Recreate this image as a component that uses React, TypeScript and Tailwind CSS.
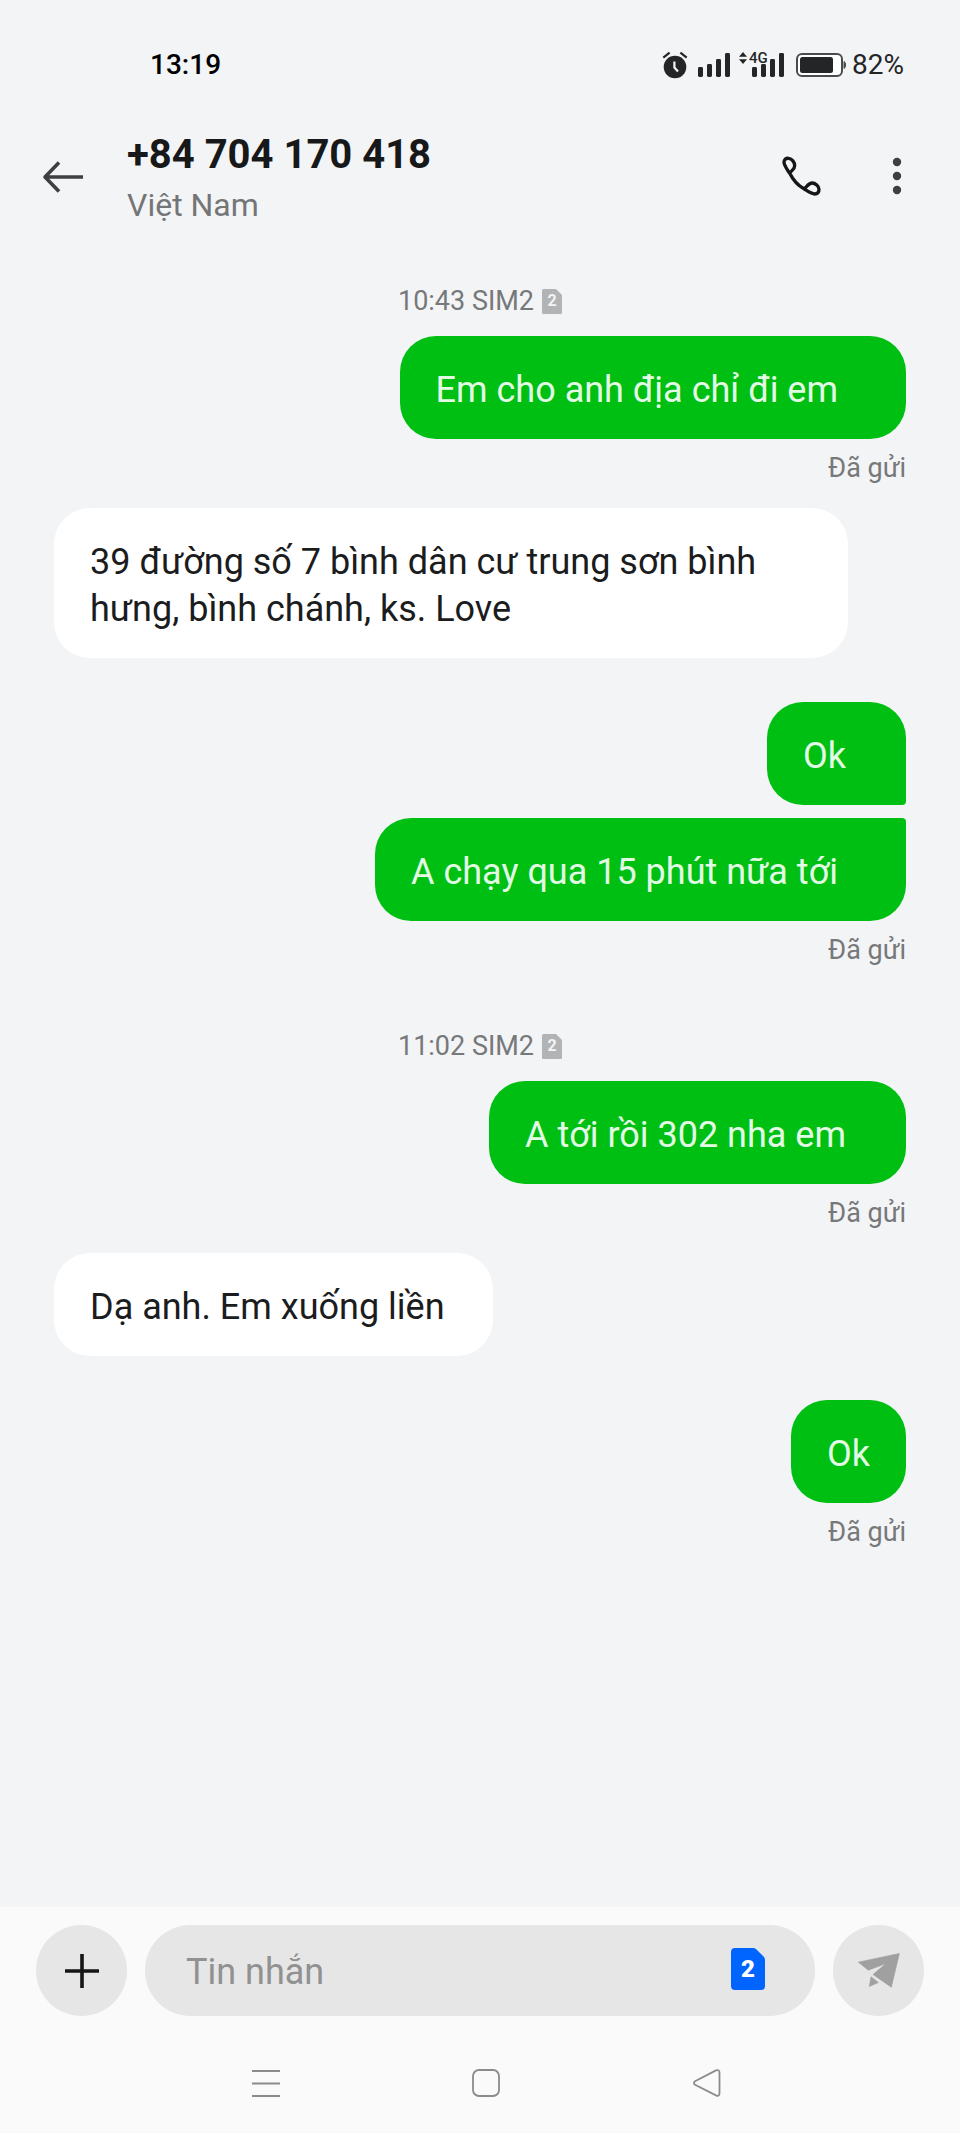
import { Fragment } from "react";

type Message = {
  text: string;
  outgoing: boolean;
  shape: string;
  status?: string;
  space: string;
};

type Group = { time: string; sim: string; slot: string; space: string; messages: Message[] };

const groups: Group[] = [
  {
    time: "10:43",
    sim: "SIM2",
    slot: "2",
    space: "mt-[62px]",
    messages: [
      { text: "Em cho anh địa chỉ đi em", outgoing: true, shape: "rounded-[36px] pr-[68px]", status: "Đã gửi", space: "mt-[19px]" },
      { text: "39 đường số 7 bình dân cư trung sơn bình hưng, bình chánh, ks. Love", outgoing: false, shape: "rounded-[36px] pr-9", space: "mt-6" },
      { text: "Ok", outgoing: true, shape: "rounded-[36px] rounded-br-[4px] pr-[60px]", space: "mt-11" },
      { text: "A chạy qua 15 phút nữa tới", outgoing: true, shape: "rounded-[36px] rounded-tr-[4px] pr-[68px]", status: "Đã gửi", space: "mt-[13px]" },
    ],
  },
  {
    time: "11:02",
    sim: "SIM2",
    slot: "2",
    space: "mt-16",
    messages: [
      { text: "A tới rồi 302 nha em", outgoing: true, shape: "rounded-[36px] pr-[60px]", status: "Đã gửi", space: "mt-[19px]" },
      { text: "Dạ anh. Em xuống liền", outgoing: false, shape: "rounded-[36px] pr-12", space: "mt-6" },
      { text: "Ok", outgoing: true, shape: "rounded-[36px] pr-9", status: "Đã gửi", space: "mt-11" },
    ],
  },
];

function AlarmIcon() {
  return (
    <svg viewBox="0 0 26 28" className="h-7 w-[26px]" aria-hidden="true">
      <circle cx="13" cy="16" r="11.3" fill="#242526" />
      <path d="M12.4 10.5v6l3.6 4" fill="none" stroke="#f3f4f6" strokeWidth="2.2" />
      <path d="M1.3 6.6 7.6 1.7M18.4 1.7l6.3 4.9" stroke="#242526" strokeWidth="2.2" />
    </svg>
  );
}

function SignalIcon() {
  return (
    <svg viewBox="0 0 32 24" className="h-6 w-8" fill="#242526" aria-hidden="true">
      <rect x="0" y="14" width="5" height="10" rx="1.4" />
      <rect x="9" y="11" width="5" height="13" rx="1.4" />
      <rect x="18" y="6" width="5" height="18" rx="1.4" />
      <rect x="27" y="0" width="5" height="24" rx="1.4" />
    </svg>
  );
}

function BatteryIcon() {
  return (
    <svg viewBox="0 0 50 24" className="h-6 w-[50px]" aria-hidden="true">
      <rect x="1" y="1" width="45" height="22" rx="5" fill="#fff" stroke="#4a4b4c" strokeWidth="2" />
      <rect x="4" y="4" width="33" height="16" rx="2.5" fill="#242526" />
      <path d="M48 8.5q1.6.5 1.6 3.5T48 15.500z" fill="#4a4b4c" stroke="#4a4b4c" strokeWidth="1" />
    </svg>
  );
}

function StatusBar() {
  return (
    <div className="flex h-[101px] items-center justify-between pt-7 pr-14 pl-[150px] text-[28px] leading-8 text-[#242526]">
      <span className="font-medium text-black">13:19</span>
      <div className="flex items-center">
        <AlarmIcon />
        <div className="ml-[10px]">
          <SignalIcon />
        </div>
        <div className="relative ml-[22px]">
          <SignalIcon />
          <svg viewBox="0 0 8 12" className="absolute -top-px -left-[13px] h-3 w-2" fill="#242526" aria-hidden="true">
            <path d="M4 0 8 4.800H0zM4 12 8 7.200H0z" />
          </svg>
          <span className="absolute -top-px -left-[3px] bg-[#f3f4f6] text-[15px] leading-3 font-medium">4G</span>
        </div>
        <div className="ml-3">
          <BatteryIcon />
        </div>
        <span className="ml-[6px]">82%</span>
      </div>
    </div>
  );
}

function Header() {
  return (
    <header className="flex items-center pt-[30px] pr-[55px] pl-[42px]">
      <button type="button" aria-label="Quay lại" className="flex">
        <svg viewBox="0 0 42 34" className="h-[34px] w-[42px]" fill="none" stroke="#3e3f40" strokeWidth="3.600" aria-hidden="true">
          <path d="M3 17h38M17 2.500 3 17l14 14.500" strokeLinejoin="round" />
        </svg>
      </button>
      <div className="ml-[43px] flex flex-1 flex-col gap-2">
        <h1 className="text-[40px] leading-[48px] font-bold text-[#17181a]">+84 704 170 418</h1>
        <p className="text-[32px] leading-9 text-[#747577]">Việt Nam</p>
      </div>
      <button type="button" aria-label="Gọi" className="flex">
        <svg viewBox="125 73 126 126" className="size-[42px]" fill="none" stroke="#151617" strokeWidth="10" strokeLinejoin="round" strokeLinecap="round" aria-hidden="true">
          <path d="M151 125C141 110 134 101 134 92C134 83 140 79 148 80C158 81 166 92 166 102C166 113 158 115 151 124C160 143 175 161 195 172C206 179 217 187 226 187C235 187 239 181 239 173C239 163 228 154 218 154C208 154 204 164 195 171" />
        </svg>
      </button>
      <button type="button" aria-label="Tùy chọn khác" className="ml-[66px] flex">
        <svg viewBox="0 1 16 40" className="h-10 w-4" fill="#3e3f40" aria-hidden="true">
          <circle cx="8" cy="6" r="4.200" />
          <circle cx="8" cy="20" r="4.200" />
          <circle cx="8" cy="34" r="4.200" />
        </svg>
      </button>
    </header>
  );
}

function Bubble({ message }: { message: Message }) {
  const side = message.outgoing ? "items-end" : "items-start";
  const colour = message.outgoing ? "bg-[#00bf13] text-[#e3fbe4]" : "bg-white text-[#1b1c1e]";
  return (
    <li className={`flex flex-col ${side} ${message.space}`}>
      <p className={`max-w-[794px] pt-[31px] pb-[25px] pl-9 text-[36px] leading-[47px] ${message.shape} ${colour}`}>{message.text}</p>
      {message.status && <span className="mt-[13px] text-[27px] leading-8 text-[#77787a]">{message.status}</span>}
    </li>
  );
}

function Conversation() {
  return (
    <main className="flex-1 px-[54px] pb-10">
      {groups.map((group) => (
        <Fragment key={group.time}>
          <div className={`flex items-center justify-center gap-2 text-[27px] leading-8 text-[#77787a] ${group.space}`}>
            <span>
              {group.time} {group.sim}
            </span>
            <span className="relative flex h-[25px] w-5 items-center justify-center text-[16px] leading-none font-bold text-[#f3f4f6]">
              <svg viewBox="0 0 20 25" className="absolute inset-0 size-full" fill="#b2b3b4" aria-hidden="true">
                <path d="M1.500 0H14l6 6v17.500q0 1.500-1.500 1.500h-17Q0 25 0 23.500v-22Q0 0 1.500 0z" />
              </svg>
              <span className="relative">{group.slot}</span>
            </span>
          </div>
          <ul className="flex flex-col">
            {group.messages.map((message, i) => (
              <Bubble key={i} message={message} />
            ))}
          </ul>
        </Fragment>
      ))}
    </main>
  );
}

function Composer() {
  return (
    <form className="flex items-center gap-[18px] px-9 pt-[18px]" onSubmit={(e) => e.preventDefault()}>
      <button type="button" aria-label="Thêm" className="flex size-[91px] shrink-0 items-center justify-center rounded-full bg-[#e6e6e6]">
        <svg viewBox="0 0 34 34" className="size-[34px]" stroke="#151515" strokeWidth="3.600" aria-hidden="true">
          <path d="M17 0v34M0 17h34" />
        </svg>
      </button>
      <div className="flex h-[91px] min-w-0 flex-1 items-center rounded-full bg-[#e6e6e6] pr-[50px] pl-[41px]">
        <input
          type="text"
          aria-label="Tin nhắn"
          placeholder="Tin nhắn"
          className="h-12 min-w-0 flex-1 bg-transparent pt-[3px] text-[36px] text-[#1b1c1e] outline-none placeholder:text-[#919191]"
        />
        <button type="button" aria-label="SIM 2" className="relative mb-1 flex h-[42px] w-[34px] items-center justify-center text-[24px] leading-none font-black text-white">
          <svg viewBox="0 0 34 42" className="absolute inset-0 size-full" fill="#0065ff" aria-hidden="true">
            <path d="M4 0h18q2 0 3.200 1.200l7.600 7.600Q34 10 34 12v26q0 4-4 4H4q-4 0-4-4V4q0-4 4-4z" />
          </svg>
          <span className="relative">2</span>
        </button>
      </div>
      <button type="submit" aria-label="Gửi" className="flex size-[91px] shrink-0 items-center justify-center rounded-full bg-[#e6e6e6]">
        <svg viewBox="1132 192 126 104" className="h-[35px] w-[42px]" fill="#a0a0a0" stroke="#a0a0a0" strokeWidth="2" strokeLinejoin="round" aria-hidden="true">
          <path d="M1133 219 1256 193 1232 294 1177 256 1216 223 1163 243z" />
          <path d="M1171 263 1193 280 1166 292z" />
        </svg>
      </button>
    </form>
  );
}

function SystemNav() {
  return (
    <nav aria-label="Điều hướng hệ thống" className="mt-[52px] grid grid-cols-3 justify-items-center pr-[143px] pb-[35px] pl-[156px]">
      <button type="button" aria-label="Gần đây" className="flex">
        <svg viewBox="0 0 30 30" className="size-[30px]" stroke="#8b8b8b" strokeWidth="2" aria-hidden="true">
          <path d="M1 3h28M1 15.500h28M1 28h28" />
        </svg>
      </button>
      <button type="button" aria-label="Màn hình chính" className="flex">
        <svg viewBox="0 0 30 30" className="size-[30px]" fill="none" stroke="#8b8b8b" strokeWidth="1.800" aria-hidden="true">
          <rect x="2" y="2" width="26" height="26" rx="6" />
        </svg>
      </button>
      <button type="button" aria-label="Trở lại" className="flex">
        <svg viewBox="0 0 30 30" className="size-[30px]" fill="none" stroke="#8b8b8b" strokeWidth="1.800" strokeLinejoin="round" aria-hidden="true">
          <path d="M3 13.200 24 2.400Q27.500 1 27.500 5V25Q27.500 29 24 27.400L3 16.800Q.8 15 3 13.200z" />
        </svg>
      </button>
    </nav>
  );
}

export default function App() {
  return (
    <div className="flex min-h-screen flex-col bg-[#f3f4f6] font-['Roboto','Noto_Sans',sans-serif]">
      <StatusBar />
      <Header />
      <Conversation />
      <footer className="bg-[#fafafa]">
        <Composer />
        <SystemNav />
      </footer>
    </div>
  );
}
